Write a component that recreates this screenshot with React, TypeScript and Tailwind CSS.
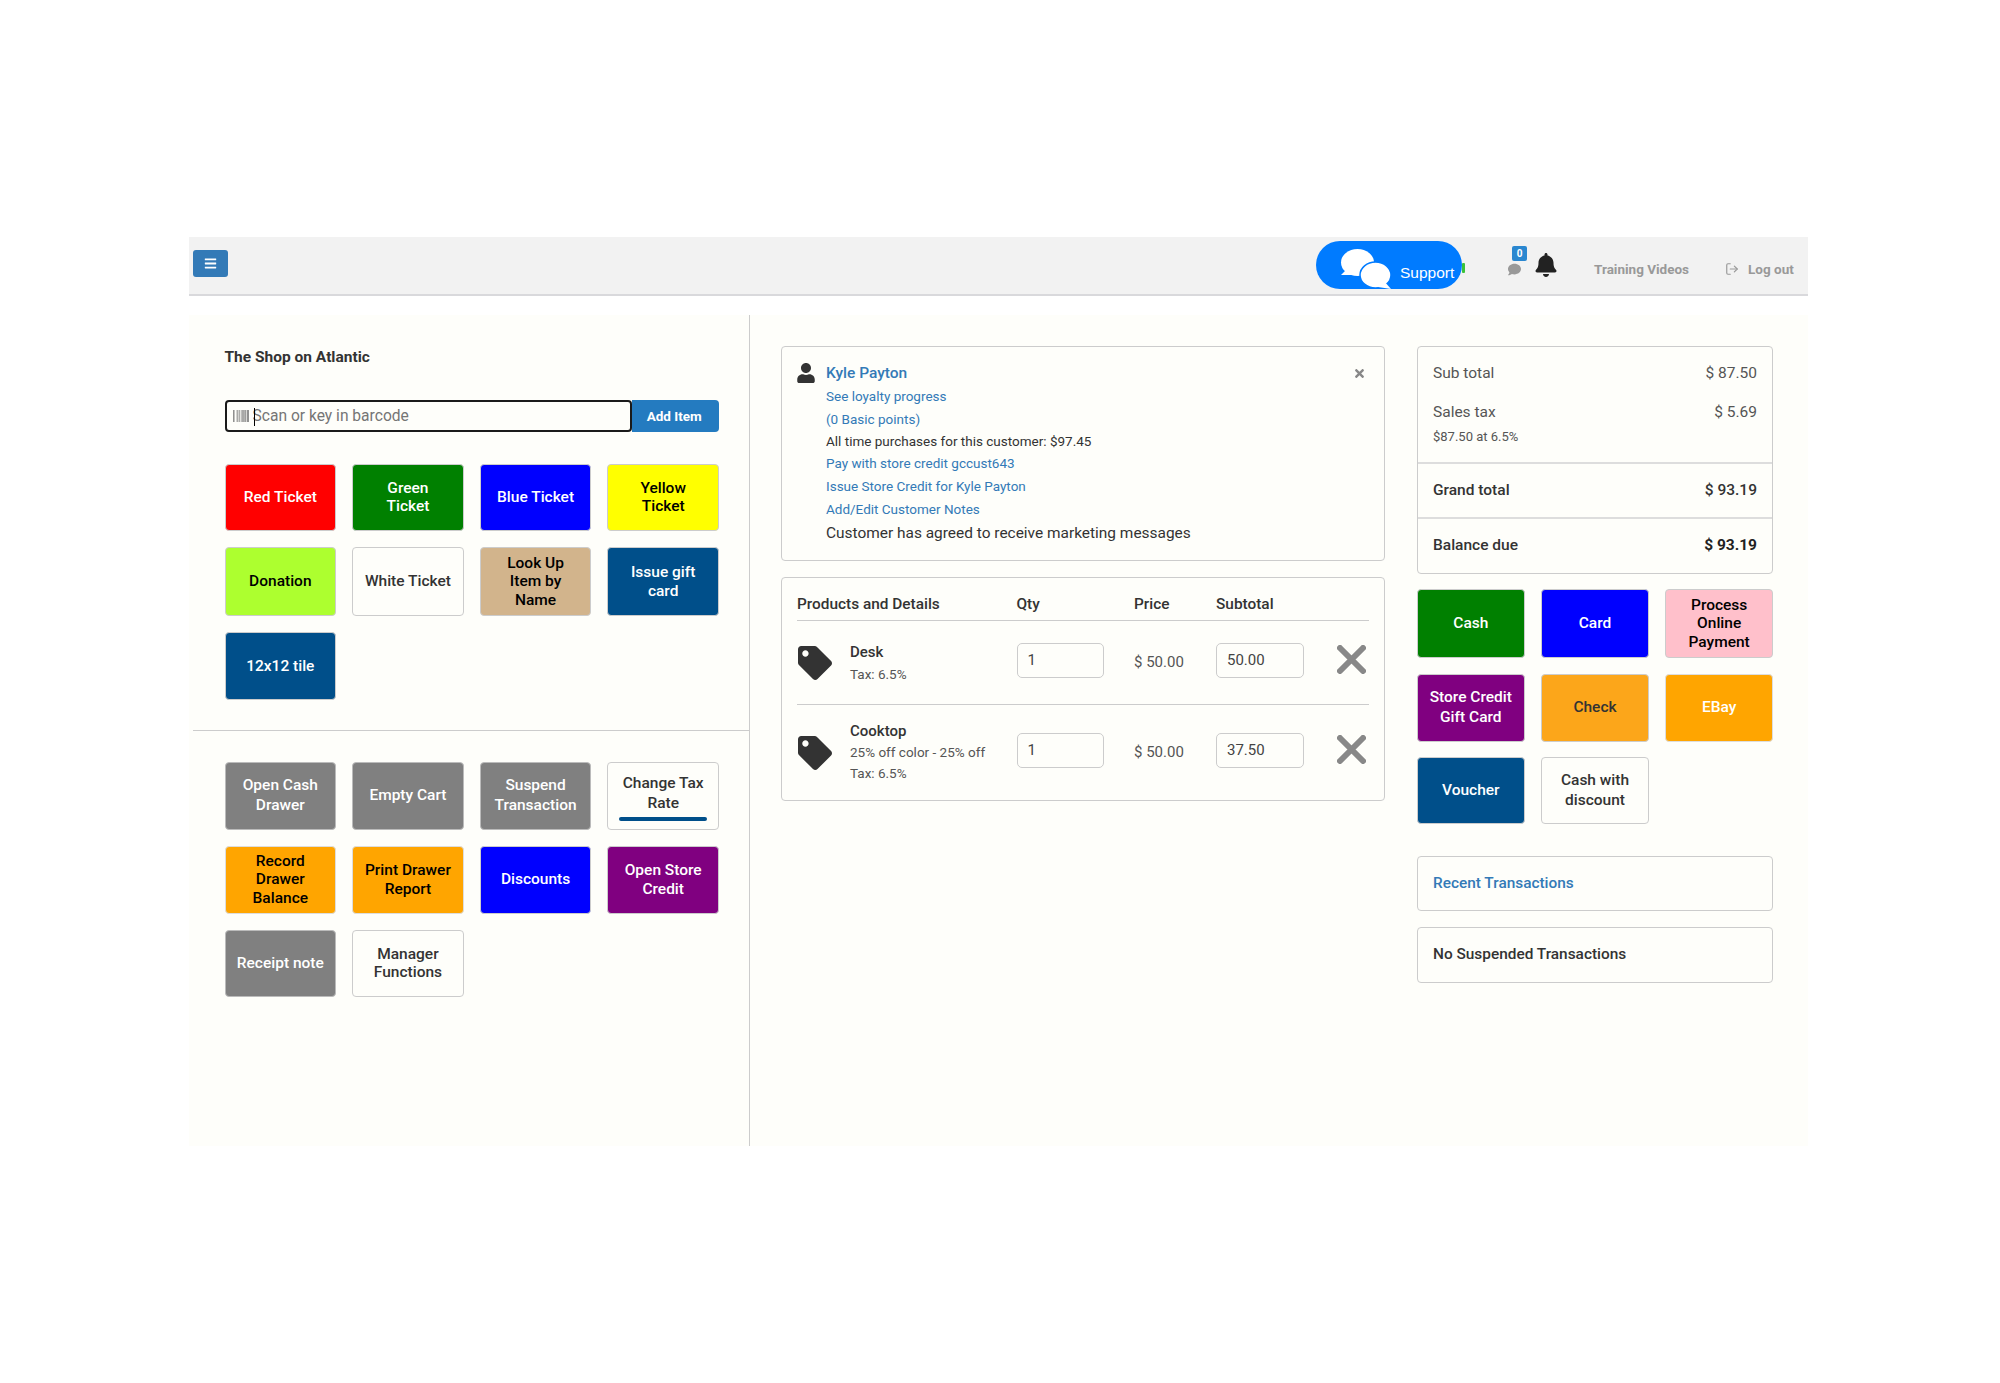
import React from "react";
import { FaBars, FaBarcode, FaUser, FaTag, FaBell, FaComment, FaTimes } from "react-icons/fa";
import { LogOut } from "lucide-react";

function Btn({ c, children, tall, extra }: { c: string; children: React.ReactNode; tall?: boolean; extra?: React.ReactNode }) {
  return (
    <div className={`relative flex items-center justify-center rounded-[4px] border px-1 text-center text-[15.5px] font-medium ${tall ? "leading-[19.5px]" : "leading-[18.5px]"} ${c}`}>
      <span>{children}</span>
      {extra}
    </div>
  );
}

const white = "bg-[#fefefa] border-[#cccccc] text-[#333333]";
const gray = "bg-[#808080] border-[#bbbbbb] text-white";
const orange = "bg-[#ffa500] border-[#dddddd] text-black";
const blue = "bg-[#0000ff] border-[#cccccc] text-white";
const purple = "bg-[#800080] border-[#cccccc] text-white";
const navy = "bg-[#004f8a] border-[#cccccc] text-white";
const green = "bg-[#008000] border-[#cccccc] text-white";

function XIcon() {
  return (
    <svg viewBox="0 0 29 29" className="h-[29px] w-[29px]">
      <path d="M3 3 L26 26 M26 3 L3 26" stroke="#888888" strokeWidth="6" strokeLinecap="round" fill="none" />
    </svg>
  );
}

function Row({ h, input, sub, children }: { h: string; input: string; sub: string; children: React.ReactNode }) {
  return (
    <div className={`grid grid-cols-[219.5px_117.5px_82px_1fr] items-center ${h}`}>
      <div className="flex items-center">
        <FaTag className="ml-[1px] h-[34px] w-[34px] text-[#333333]" />
        <div className="ml-[18px] text-[#333333]">{children}</div>
      </div>
      <div className="mb-[4px] flex h-[35px] w-[87px] items-center rounded-[5px] border border-[#cccccc] pl-[10px] text-[15px] text-[#444444]">{input}</div>
      <div className="text-[15px] text-[#555555]">$ 50.00</div>
      <div className="flex items-center justify-between">
        <div className="mb-[4px] flex h-[35px] w-[88px] items-center rounded-[5px] border border-[#cccccc] pl-[10px] text-[15px] text-[#444444]">{sub}</div>
        <div className="mr-[3px] mb-[6px]"><XIcon /></div>
      </div>
    </div>
  );
}

export default function App() {
  return (
    <div className="min-h-[1383px] bg-white pt-[237px] font-['Roboto',sans-serif] text-[#333333]">
      <div className="ml-[189px] w-[1619px]">
        <header className="flex h-[59px] items-start border-b-2 border-[#d9d9dc] bg-[#f2f2f2]">
          <div className="mt-[13px] ml-[4px] flex h-[27px] w-[35px] items-center justify-center rounded-[3px] bg-[#337ab7]">
            <FaBars className="h-[13px] w-[13px] text-white" />
          </div>
          <div className="relative mt-[4px] ml-[1088px] flex h-[48px] w-[146px] items-end rounded-[24px] bg-[#007bff] pb-[6px] pl-[84px] font-['Liberation_Sans',sans-serif] text-[15.5px] leading-[20px] text-white">
            Support
            <svg viewBox="0 0 52 40" className="absolute top-[8px] left-[24px] h-[40px] w-[52px]" fill="white">
              <ellipse cx="17.5" cy="13.5" rx="16.5" ry="13.5" />
              <path d="M6 21 L1 26 L12 26 Z" />
              <ellipse cx="35.5" cy="26" rx="15.5" ry="13" stroke="#007bff" strokeWidth="1.5" />
              <path d="M44 32 L51 40 L38 38 Z" />
            </svg>
            <span className="absolute top-[22px] -right-[3px] h-[10px] w-[3px] rounded-[1px] bg-[#3ac23a]" />
          </div>
          <div className="relative mt-[26px] ml-[45px] h-[12px] w-[15px]">
            <FaComment className="h-[13px] w-[15px] text-[#999999]" />
            <span className="absolute -top-[17px] left-[5px] flex h-[15px] w-[15px] items-center justify-center rounded-[2px] bg-[#2a87d0] text-[10px] font-bold text-white">0</span>
          </div>
          <FaBell className="mt-[16px] ml-[13px] h-[24px] w-[22px] text-[#222222]" />
          <span className="mt-[22px] ml-[37px] text-[13.5px] leading-[20px] font-bold text-[#999999]">Training Videos</span>
          <LogOut className="mt-[25px] ml-[36px] h-[14px] w-[14px] text-[#999999]" strokeWidth={2} />
          <span className="mt-[22px] ml-[9px] text-[13.5px] leading-[20px] font-bold text-[#999999]">Log out</span>
        </header>

        <main className="mt-[19px] flex h-[831px] bg-[#fefefa]">
          <section className="w-[561px] border-r border-[#cccccc]">
            <div className="pl-[35.5px]">
              <h1 className="pt-[34px] text-[15.5px] leading-[16px] font-bold text-[#333333]">The Shop on Atlantic</h1>
              <div className="mt-[35px] flex h-[32px] w-[494.5px]">
                <div className="relative flex w-[407px] items-center rounded-[4px] border-2 border-[#1a1a1a] bg-[#fefefa] pl-[6px]">
                  <FaBarcode className="h-[16px] w-[16px] text-[#666666]" />
                  <input readOnly placeholder="Scan or key in barcode" className="mt-[2px] ml-[4px] w-[360px] bg-transparent text-[15.6px] outline-none placeholder:text-[#757575]" />
                  <span className="absolute top-[6px] left-[27px] h-[18px] w-px bg-black" />
                </div>
                <div className="flex flex-1 items-center justify-center rounded-r-[4px] bg-[#247bc0] pr-[2px] text-[13.5px] font-bold text-white">Add Item</div>
              </div>
              <div className="mt-[31.5px] grid w-[494.5px] grid-cols-4 grid-rows-[67.5px_69px_68px] gap-4">
                <Btn c="bg-[#ff0000] border-[#cccccc] text-white">Red Ticket</Btn>
                <Btn c={green}>Green<br />Ticket</Btn>
                <Btn c={blue}>Blue Ticket</Btn>
                <Btn c="bg-[#ffff00] border-[#cccccc] text-black">Yellow<br />Ticket</Btn>
                <Btn c="bg-[#adff2f] border-[#cccccc] text-black">Donation</Btn>
                <Btn c={white}>White Ticket</Btn>
                <Btn c="bg-[#d2b48c] border-[#cccccc] text-black">Look Up<br />Item by<br />Name</Btn>
                <Btn c={navy}>Issue gift<br />card</Btn>
                <Btn c={navy}>12x12 tile</Btn>
              </div>
            </div>
            <div className="mt-[30px] ml-[4px] border-t border-[#cccccc]" />
            <div className="mt-[31px] ml-[35.5px] grid w-[494.5px] grid-cols-4 grid-rows-[67.5px_68px_67px] gap-4">
              <Btn c={gray} tall>Open Cash<br />Drawer</Btn>
              <Btn c={gray} tall>Empty Cart</Btn>
              <Btn c={gray} tall>Suspend<br />Transaction</Btn>
              <Btn c={white + " pb-[4px] text-[#222222]"} tall extra={<span className="absolute right-[11px] bottom-[8px] left-[11px] h-[4px] rounded-[2px] bg-[#004f8a]" />}>Change Tax<br />Rate</Btn>
              <Btn c={orange}>Record<br />Drawer<br />Balance</Btn>
              <Btn c={orange}>Print Drawer<br />Report</Btn>
              <Btn c={blue}>Discounts</Btn>
              <Btn c={purple}>Open Store<br />Credit</Btn>
              <Btn c={gray}>Receipt note</Btn>
              <Btn c={white}>Manager<br />Functions</Btn>
            </div>
          </section>

          <section className="ml-[31px] w-[604px] pt-[31px]">
            <div className="relative h-[215px] rounded-[4px] border border-[#cccccc] pt-[14px] pl-[44px]">
              <FaUser className="absolute top-[16px] left-[15px] h-[20px] w-[18px] text-[#333333]" />
              <FaTimes className="absolute top-[20px] right-[19px] h-[13px] w-[11px] text-[#888888]" />
              <div className="text-[15.5px] leading-[24px] font-medium text-[#337ab7]">Kyle Payton</div>
              <div className="text-[13.5px] leading-[23px] text-[#337ab7]">See loyalty progress</div>
              <div className="text-[13.5px] leading-[23px] text-[#337ab7]">(0 Basic points)</div>
              <div className="text-[13.5px] leading-[20px] text-[#333333]">All time purchases for this customer: $97.45</div>
              <div className="text-[13.5px] leading-[24px] text-[#337ab7]">Pay with store credit gccust643</div>
              <div className="text-[13.5px] leading-[23px] text-[#337ab7]">Issue Store Credit for Kyle Payton</div>
              <div className="text-[13.5px] leading-[23px] text-[#337ab7]">Add/Edit Customer Notes</div>
              <div className="text-[15.45px] leading-[24px] text-[#333333]">Customer has agreed to receive marketing messages</div>
            </div>

            <div className="mt-[16px] h-[224px] rounded-[4px] border border-[#cccccc] px-[15px]">
              <div className="grid h-[43px] grid-cols-[219.5px_117.5px_82px_1fr] border-b border-[#cccccc] pt-[16px] text-[15.4px] leading-[20px] font-medium text-[#333333]">
                <span>Products and Details</span>
                <span>Qty</span>
                <span>Price</span>
                <span>Subtotal</span>
              </div>
              <Row h="h-[84px] border-b border-[#cccccc]" input="1" sub="50.00">
                <div className="text-[15px] leading-[22px] font-medium">Desk</div>
                <div className="text-[13.5px] leading-[22px] text-[#555555]">Tax: 6.5%</div>
              </Row>
              <Row h="h-[95px]" input="1" sub="37.50">
                <div className="text-[15px] leading-[21px] font-medium">Cooktop</div>
                <div className="text-[13.5px] leading-[21px] text-[#555555]">25% off color - 25% off</div>
                <div className="text-[13.5px] leading-[21px] text-[#555555]">Tax: 6.5%</div>
              </Row>
            </div>
          </section>

          <section className="ml-[32px] w-[356px] pt-[31px]">
            <div className="h-[228px] rounded-[4px] border border-[#cccccc] text-[15.5px]">
              <div className="h-[117px] border-b-2 border-[#dddddd] px-[15px] pt-[15px]">
                <div className="flex h-[24px] items-center justify-between text-[#555555]"><span>Sub total</span><span>$ 87.50</span></div>
                <div className="mt-[15px] flex h-[24px] items-center justify-between text-[#555555]"><span>Sales tax</span><span>$ 5.69</span></div>
                <div className="text-[13px] leading-[24px] text-[#555555]">$87.50 at 6.5%</div>
              </div>
              <div className="flex h-[55px] items-center justify-between border-b-2 border-[#dddddd] px-[15px] font-medium"><span>Grand total</span><span>$ 93.19</span></div>
              <div className="flex h-[54px] items-center justify-between px-[15px] font-medium"><span>Balance due</span><span className="font-bold text-[#222222]">$ 93.19</span></div>
            </div>

            <div className="mt-[15px] grid grid-cols-3 grid-rows-[69px_68px_67px] gap-x-[16.5px] gap-y-[15.5px]">
              <Btn c={green}>Cash</Btn>
              <Btn c={blue}>Card</Btn>
              <Btn c="bg-[#ffc0cb] border-[#cccccc] text-black">Process<br />Online<br />Payment</Btn>
              <Btn c={purple} tall>Store Credit<br />Gift Card</Btn>
              <Btn c="bg-[#fca61a] border-[#cccccc] text-[#333333]">Check</Btn>
              <Btn c="bg-[#ffa500] border-[#dddddd] text-white">EBay</Btn>
              <Btn c={navy}>Voucher</Btn>
              <Btn c={white} tall>Cash with<br />discount</Btn>
            </div>

            <div className="mt-[32px] flex h-[55px] items-center rounded-[4px] border border-[#cccccc] pl-[15px] text-[15.4px] font-medium text-[#337ab7]">Recent Transactions</div>
            <div className="mt-[16px] flex h-[56px] items-center rounded-[4px] border border-[#cccccc] pl-[15px] text-[15.4px] font-medium text-[#333333]">No Suspended Transactions</div>
          </section>
        </main>
      </div>
    </div>
  );
}
